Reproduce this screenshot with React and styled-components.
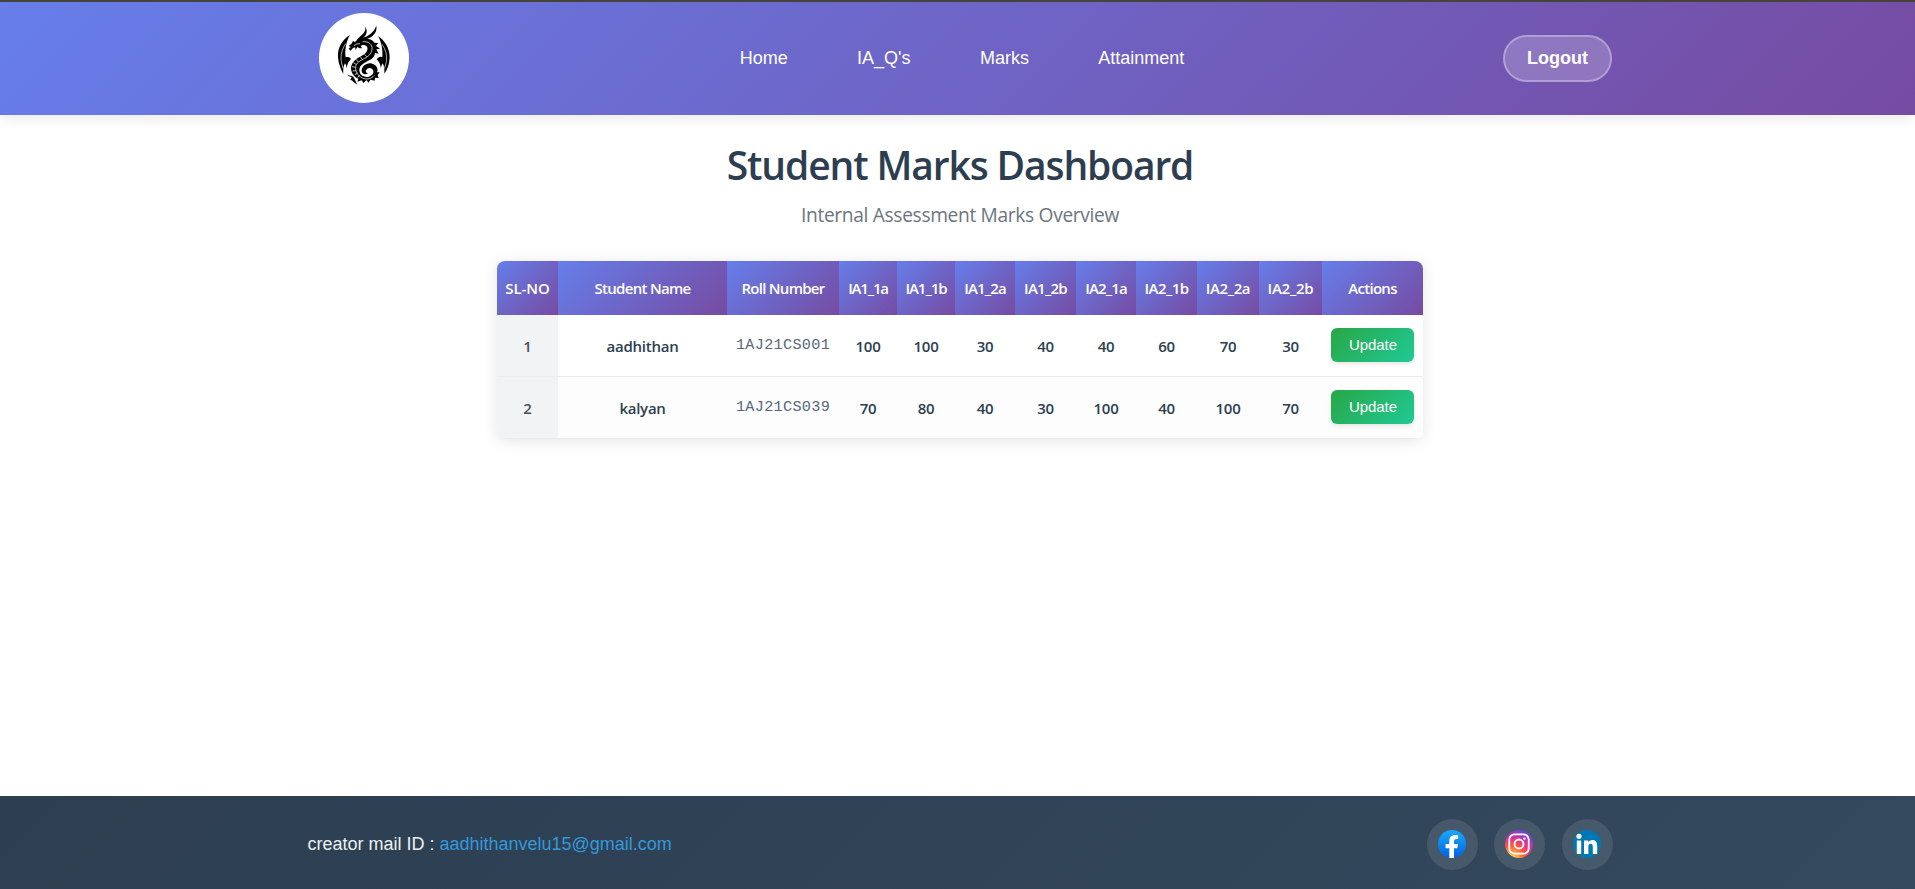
import React from "react";
import styled, { createGlobalStyle } from "styled-components";

const GlobalStyle = createGlobalStyle`
  * { box-sizing: border-box; }
  body {
    margin: 0;
    background: #fff;
    font-family: "Liberation Sans", Arial, sans-serif;
  }
`;

const Page = styled.div`
  min-height: 889px;
  height: 100vh;
  display: flex;
  flex-direction: column;
  overflow: hidden;
`;

const Header = styled.header`
  height: 115px;
  flex-shrink: 0;
  border-top: 2px solid #46433a;
  padding: 0 303px 1px 307px;
  display: flex;
  align-items: center;
  justify-content: space-between;
  background: linear-gradient(135deg, #667eea 0%, #764ba2 100%) padding-box;
  box-shadow: 0 2px 15px rgba(0, 0, 0, 0.1);
`;

const LogoLink = styled.a`
  display: flex;
  padding: 0 12px 1px;
  svg { display: block; width: 90px; height: 90px; }
`;

const Nav = styled.nav`
  display: flex;
  gap: 45.4px;
  padding-bottom: 1px;
`;

const NavLink = styled.a`
  padding: 8px 12px;
  color: #fff;
  font-size: 18px;
  line-height: 20px;
`;

const LogoutButton = styled.button`
  width: 109px;
  height: 47px;
  padding: 0 0 1px;
  border: 2px solid rgba(255, 255, 255, 0.3);
  border-radius: 25px;
  background: rgba(255, 255, 255, 0.2);
  color: #fff;
  font: bold 18px/20px "Liberation Sans", Arial, sans-serif;
`;

const Main = styled.main`
  flex: 1;
  padding: 26px 0 0 5px;
  text-align: center;
  font-family: "Open Sans", "Noto Sans", sans-serif;
`;

const Title = styled.h1`
  margin: 0 0 11px;
  color: #2c3e50;
  font-size: 39px;
  font-weight: 600;
  line-height: 48px;
  letter-spacing: -1.12px;
`;

const Subtitle = styled.p`
  margin: 0 0 32px;
  color: #6c757d;
  font-size: 19.2px;
  line-height: 29px;
  letter-spacing: -0.34px;
`;

const TableCard = styled.div`
  width: 926px;
  margin: 0 auto;
  border-radius: 8px;
  overflow: hidden;
  box-shadow: 0 2px 15px rgba(0, 0, 0, 0.1);
`;

const Table = styled.table`
  width: 100%;
  table-layout: fixed;
  border-collapse: separate;
  border-spacing: 0;
`;

const Th = styled.th`
  width: ${(p) => p.$width}px;
  height: 54px;
  padding: 0;
  background: linear-gradient(135deg, #667eea 0%, #764ba2 100%);
  color: #fff;
  font-size: 15px;
  font-weight: 600;
  letter-spacing: ${(p) => p.$track}px;
  white-space: nowrap;
`;

const Row = styled.tr`
  background: ${(p) => (p.$striped ? "#fdfdfd" : "#fff")};
`;

const Td = styled.td`
  height: 62px;
  padding: 0;
  border-bottom: 1px solid #e9ecef;
  color: #2c3e50;
  font-size: 15px;
  font-weight: 600;
  letter-spacing: -0.25px;
`;

const IndexCell = styled(Td)`
  background: #f1f3f5;
  color: #495057;
`;

const RollCell = styled(Td)`
  padding-bottom: 2px;
  color: #56677a;
  font-family: "Liberation Mono", "Courier New", monospace;
  font-size: 15.2px;
  font-weight: 400;
  letter-spacing: 0.3px;
`;

const ActionCell = styled(Td)`
  padding-bottom: 2px;
`;

const UpdateButton = styled.button`
  display: block;
  width: 83px;
  height: 34px;
  margin: 0 auto;
  padding: 0 0 1px 1px;
  border: 0;
  border-radius: 6px;
  background: linear-gradient(135deg, #28a745, #20c997);
  box-shadow: 0 2px 4px rgba(0, 0, 0, 0.1);
  color: #fff;
  font: 15px "Liberation Sans", Arial, sans-serif;
  letter-spacing: -0.1px;
`;

const Footer = styled.footer`
  height: 93px;
  flex-shrink: 0;
  padding: 3px 302.3px 0 307.4px;
  display: flex;
  align-items: center;
  justify-content: space-between;
  background: linear-gradient(135deg, #2c3e50 0%, #34495e 100%);
`;

const Contact = styled.p`
  margin: 0;
  color: #ecf0f1;
  font-size: 18px;
  line-height: 20px;
`;

const MailLink = styled.a`
  color: #3498db;
`;

const Socials = styled.div`
  display: flex;
  gap: 16.5px;
`;

const SocialLink = styled.a`
  width: 51px;
  height: 51px;
  display: flex;
  align-items: center;
  justify-content: center;
  border-radius: 50%;
  background: rgba(255, 255, 255, 0.1);
  svg { display: block; width: 28px; height: 28px; margin: 0 1px 1px 0; }
`;

const DragonLogo = () => (
  <svg viewBox="-45 -27 270 270" aria-label="Dragon logo">
    <circle cx="90" cy="108" r="135" fill="#fff" />
    {/* wings */}
    <path d="M48 39C25 52 10 78 12 105C13 124 20 142 28 156C27 143 28 132 33 124C37 130 38 137 38 142C38 130 42 120 51 111C46 105 41 104 35 106C32 86 36 58 48 39Z" />
    <path d="M132 42C151 54 168 79 167 107C166 127 160 143 151 155C152 143 151 132 146 124C142 130 141 136 141 141C140 128 136 120 128 112C134 104 139 103 145 106C147 86 143 60 132 42Z" />
    <path d="M35 65C24 82 19 98 22 119L27 140M144 67C154 82 160 98 157 119L152 139" fill="none" stroke="#fff" strokeWidth="2" />
    {/* horns, head, neck and coiled tail */}
    <path d="M66 58C74 40 97 38 94 14C104 31 94 44 84 49C98 42 117 37 127 11C131 34 113 47 94 52C106 49 116 54 121 62L133 63L126 71L138 80L127 82L134 95L123 93C122 106 112 112 100 118C90 123 78 130 76 142C75 156 86 166 100 165C114 163 121 154 117 144C112 135 100 136 96 145C94 150 97 154 102 153C96 160 83 156 83 147C83 134 95 122 111 124C128 128 134 141 129 151L137 151L131 159L134 168L123 167L122 176L110 173L103 182L98 174L88 183L83 175L70 179L73 171C57 163 48 146 52 132C57 115 72 108 86 100C99 93 104 80 98 73C92 68 84 68 80 73L84 78C79 80 74 78 71 74L64 84L64 76L57 78L50 86L44 80L50 75L44 72L52 66L57 57L62 60Z" />
    <path d="M60 71L68 66L78 65M86 59C104 57 116 68 114 82C112 100 96 107 83 114C69 121 62 130 66 145C69 157 78 168 96 171C108 172 116 166 121 160" fill="none" stroke="#fff" strokeWidth="2.2" />
    {/* belly plates */}
    <path d="M92 97L98 104M79 104L84 112M67 112L72 120M58 122L66 127M54 134L64 136M56 147L66 146M62 159L70 153M71 167L76 160" fill="none" stroke="#fff" strokeWidth="2.2" />
    <path d="M39 157C47 164 57 158 62 172L70 188C61 183 56 175 49 173L53 165C47 165 42 162 39 157Z" />
  </svg>
);

const FacebookIcon = () => (
  <svg viewBox="0 0 28 28">
    <defs>
      <linearGradient id="fb" x1="0" y1="0" x2="0" y2="1">
        <stop offset="0" stopColor="#19aafb" />
        <stop offset="1" stopColor="#0163e0" />
      </linearGradient>
    </defs>
    <circle cx="14" cy="14" r="14" fill="url(#fb)" />
    <path d="M11.3 28V18.2H7.6V14H11.3V11C11.3 7.2 13.5 5 17.2 5C18.8 5 20.2 5.3 20.2 5.3V8.9H18.4C16.4 8.9 16 10 16 11.2V14H20L19.3 18.2H16V28Z" fill="#fff" />
  </svg>
);

const InstagramIcon = () => (
  <svg viewBox="0 0 28 28">
    <defs>
      <radialGradient id="ig" cx="0.25" cy="1.02" r="1.05">
        <stop offset="0" stopColor="#ffd45c" />
        <stop offset="0.2" stopColor="#ffac43" />
        <stop offset="0.45" stopColor="#ff543f" />
        <stop offset="0.72" stopColor="#d5319b" />
        <stop offset="1" stopColor="#6b45d6" />
      </radialGradient>
    </defs>
    <circle cx="14" cy="14" r="14" fill="url(#ig)" />
    <rect x="4.3" y="4.3" width="19.4" height="19.4" rx="5.3" fill="none" stroke="#fff" strokeWidth="1.8" />
    <circle cx="14" cy="14" r="4.5" fill="none" stroke="#fff" strokeWidth="1.9" />
    <circle cx="19.4" cy="8.6" r="1.2" fill="#fff" />
  </svg>
);

const LinkedinIcon = () => (
  <svg viewBox="0 0 28 28">
    <circle cx="14" cy="14" r="14" fill="#0077b5" />
    <circle cx="6" cy="6.3" r="2.6" fill="#fff" />
    <path d="M3.8 10.5H8.2V24H3.8ZM11 10.5H15.2V12.4C16 11 17.5 10.1 19.4 10.1C23.2 10.1 24.2 12.7 24.2 16.3V24H19.8V17.1C19.8 15.3 19.5 13.8 17.7 13.8C15.9 13.8 15.4 15.1 15.4 17V24H11Z" fill="#fff" />
  </svg>
);

const navItems = ["Home", "IA_Q's", "Marks", "Attainment"];

const columns = [
  { label: "SL-NO", width: 61, track: -0.1 },
  { label: "Student Name", width: 169, track: -0.7 },
  { label: "Roll Number", width: 112, track: -0.73 },
  { label: "IA1_1a", width: 58, track: -1.2 },
  { label: "IA1_1b", width: 58, track: -1.05 },
  { label: "IA1_2a", width: 60, track: -0.85 },
  { label: "IA1_2b", width: 61, track: -0.75 },
  { label: "IA2_1a", width: 60, track: -0.85 },
  { label: "IA2_1b", width: 61, track: -0.6 },
  { label: "IA2_2a", width: 62, track: -0.4 },
  { label: "IA2_2b", width: 63, track: -0.25 },
  { label: "Actions", width: 101, track: -0.7 },
];

const students = [
  { name: "aadhithan", roll: "1AJ21CS001", marks: [100, 100, 30, 40, 40, 60, 70, 30] },
  { name: "kalyan", roll: "1AJ21CS039", marks: [70, 80, 40, 30, 100, 40, 100, 70] },
];

export default function App() {
  return (
    <Page>
      <GlobalStyle />
      <Header>
        <LogoLink><DragonLogo /></LogoLink>
        <Nav>
          {navItems.map((item) => <NavLink key={item}>{item}</NavLink>)}
        </Nav>
        <LogoutButton>Logout</LogoutButton>
      </Header>
      <Main>
        <Title>Student Marks Dashboard</Title>
        <Subtitle>Internal Assessment Marks Overview</Subtitle>
        <TableCard>
          <Table>
            <thead>
              <tr>
                {columns.map((c) => (
                  <Th key={c.label} $width={c.width} $track={c.track}>{c.label}</Th>
                ))}
              </tr>
            </thead>
            <tbody>
              {students.map((s, i) => (
                <Row key={s.roll} $striped={i % 2 === 1}>
                  <IndexCell>{i + 1}</IndexCell>
                  <Td>{s.name}</Td>
                  <RollCell>{s.roll}</RollCell>
                  {s.marks.map((m, j) => <Td key={j}>{m}</Td>)}
                  <ActionCell><UpdateButton>Update</UpdateButton></ActionCell>
                </Row>
              ))}
            </tbody>
          </Table>
        </TableCard>
      </Main>
      <Footer>
        <Contact>creator mail ID : <MailLink>aadhithanvelu15@gmail.com</MailLink></Contact>
        <Socials>
          <SocialLink><FacebookIcon /></SocialLink>
          <SocialLink><InstagramIcon /></SocialLink>
          <SocialLink><LinkedinIcon /></SocialLink>
        </Socials>
      </Footer>
    </Page>
  );
}
